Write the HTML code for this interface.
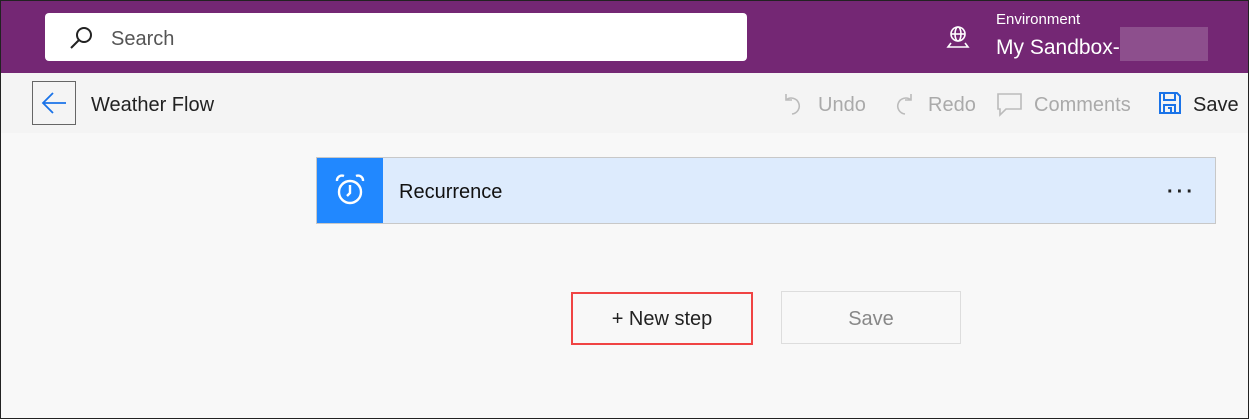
<!DOCTYPE html>
<html><head><meta charset="utf-8"><style>
*{box-sizing:border-box;margin:0;padding:0}
body{width:1249px;height:419px;overflow:hidden;background:#f8f8f8;font-family:"Liberation Sans",sans-serif;position:relative}
.frame{position:absolute;inset:0;border:1px solid #222;pointer-events:none;z-index:10}
.hdr{position:absolute;left:0;top:0;width:1249px;height:73px;background:#742774}
.search{position:absolute;left:45px;top:13px;width:702px;height:48px;background:#fff;border-radius:4px}
.search span{position:absolute;left:66px;top:15px;font-size:20px;color:#555}
.tb{position:absolute;left:0;top:73px;width:1249px;height:60px;background:#f4f4f4}
.t{position:absolute;font-size:20px}
</style></head><body>
<div class="hdr">
 <div class="search">
  <svg style="position:absolute;left:24px;top:12px" width="26" height="26" viewBox="0 0 26 26"><circle cx="15" cy="10" r="7" fill="none" stroke="#222" stroke-width="2"/><line x1="10" y1="15" x2="2" y2="23" stroke="#222" stroke-width="2"/></svg>
  <span>Search</span>
 </div>
 <svg style="position:absolute;left:946px;top:25px" width="24" height="24" viewBox="0 0 24 24" fill="none" stroke="#fff" stroke-width="1.6"><circle cx="12" cy="9" r="7"/><ellipse cx="12" cy="9" rx="3" ry="7"/><line x1="5" y1="9" x2="19" y2="9"/><path d="M5 18 L2 22 H22 L19 18"/></svg>
 <div class="t" style="left:996px;top:11px;font-size:15px;color:#fff">Environment</div>
 <div class="t" style="left:996px;top:36px;font-size:21px;color:#fff">My Sandbox-</div>
 <div style="position:absolute;left:1120px;top:27px;width:88px;height:34px;background:#8d4f8d"></div>
</div>
<div class="tb">
 <div style="position:absolute;left:32px;top:8px;width:44px;height:44px;border:1px solid #666"></div>
 <svg style="position:absolute;left:41px;top:18px" width="26" height="24" viewBox="0 0 26 24" fill="none" stroke="#1a73e8" stroke-width="1.8"><path d="M12 2 L2 12 L12 22 M2 12 H25"/></svg>
 <div class="t" style="left:91px;top:21px;color:#222">Weather Flow</div>
 <svg style="position:absolute;left:782px;top:19px" width="22" height="24" viewBox="0 0 22 24" fill="none" stroke="#bbb" stroke-width="1.6"><path d="M4 2 V8 H10 M4 8 A8 8 0 1 1 10 22"/></svg>
 <div class="t" style="left:818px;top:21px;color:#aaa">Undo</div>
 <svg style="position:absolute;left:893px;top:19px" width="22" height="24" viewBox="0 0 22 24" fill="none" stroke="#bbb" stroke-width="1.6"><path d="M18 2 V8 H12 M18 8 A8 8 0 1 0 12 22"/></svg>
 <div class="t" style="left:928px;top:21px;color:#aaa">Redo</div>
 <svg style="position:absolute;left:997px;top:20px" width="26" height="24" viewBox="0 0 26 24" fill="none" stroke="#bbb" stroke-width="1.6"><path d="M1 1 H24 V16 H9 L3 22 V16 H1 Z"/></svg>
 <div class="t" style="left:1034px;top:21px;color:#aaa">Comments</div>
 <svg style="position:absolute;left:1159px;top:19px" width="22" height="22" viewBox="0 0 22 22" fill="none" stroke="#1a73e8" stroke-width="2"><path d="M1 1 H18 L21 4 V21 H1 Z M5 1 V8 H16 V1 M5 21 V13 H16 V21 M9 16 H12 V21"/></svg>
 <div class="t" style="left:1193px;top:21px;color:#222">Save</div>
</div>
<div style="position:absolute;left:316px;top:157px;width:900px;height:67px;background:#ddebfd;border:1px solid #c8c8c8">
 <div style="position:absolute;left:0;top:0;width:66px;height:65px;background:#2188ff"></div>
 <svg style="position:absolute;left:17px;top:15px" width="32" height="34" viewBox="0 0 32 34" fill="none" stroke="#fff" stroke-width="2.4"><circle cx="16" cy="19" r="11"/><path d="M16 12 V20 L13 23"/><path d="M3 8 A5 5 0 0 1 10 3 M29 8 A5 5 0 0 0 22 3"/></svg>
 <div class="t" style="left:82px;top:23px;color:#111">Recurrence</div>
 <div style="position:absolute;left:850px;top:23px;font-size:20px;letter-spacing:3px;color:#222;font-weight:bold">···</div>
</div>
<div style="position:absolute;left:571px;top:292px;width:182px;height:53px;border:2px solid #f04444;background:#f8f8f8;text-align:center;line-height:51px;font-size:20px;color:#222">+ New step</div>
<div style="position:absolute;left:781px;top:291px;width:180px;height:53px;border:1px solid #ddd;text-align:center;line-height:54px;font-size:20px;color:#888">Save</div>
<div class="frame"></div>
</body></html>
